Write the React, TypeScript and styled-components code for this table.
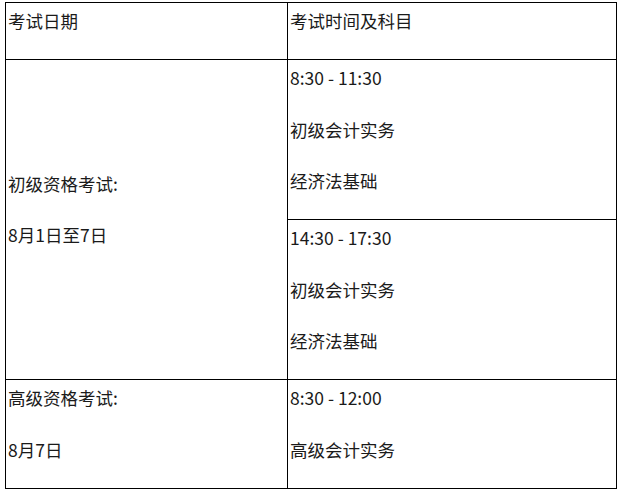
import React from "react";
import styled, { createGlobalStyle } from "styled-components";

const Global = createGlobalStyle`
  html, body { margin: 0; padding: 0; background: #fff; }
  body { font-family: "Noto Sans CJK SC", "Noto Sans", sans-serif; color: #1a1a1a; }
`;

const Table = styled.table`
  border-collapse: collapse;
  margin: 2px 0 0 5px;
  width: 611px;
  table-layout: fixed;
`;

const Col = styled.col<{ $w: number }>`
  width: ${(p) => p.$w}px;
`;

const Cell = styled.td<{ $middle?: boolean }>`
  border: 1px solid #000;
  padding: 1px 2px 21px 2px;
  vertical-align: ${(p) => (p.$middle ? "middle" : "top")};
  font-size: 17.5px;
`;

const Lines = styled.div`
  display: flex;
  flex-direction: column;
  gap: 17.5px;
`;

const Line = styled.p`
  margin: 0;
  height: 34px;
  line-height: 34px;
  white-space: nowrap;
`;

const CellLines = ({ lines, middle, rowSpan }: { lines: string[]; middle?: boolean; rowSpan?: number }) => (
  <Cell $middle={middle} rowSpan={rowSpan}>
    <Lines>
      {lines.map((l) => (
        <Line key={l}>{l}</Line>
      ))}
    </Lines>
  </Cell>
);

export default function App() {
  return (
    <>
      <Global />
      <Table>
        <colgroup>
          <Col $w={282} />
          <Col $w={329} />
        </colgroup>
        <tbody>
          <tr>
            <CellLines lines={["考试日期"]} />
            <CellLines lines={["考试时间及科目"]} />
          </tr>
          <tr>
            <CellLines lines={["初级资格考试:", "8月1日至7日"]} middle rowSpan={2} />
            <CellLines lines={["8:30 - 11:30", "初级会计实务", "经济法基础"]} />
          </tr>
          <tr>
            <CellLines lines={["14:30 - 17:30", "初级会计实务", "经济法基础"]} />
          </tr>
          <tr>
            <CellLines lines={["高级资格考试:", "8月7日"]} />
            <CellLines lines={["8:30 - 12:00", "高级会计实务"]} />
          </tr>
        </tbody>
      </Table>
    </>
  );
}
